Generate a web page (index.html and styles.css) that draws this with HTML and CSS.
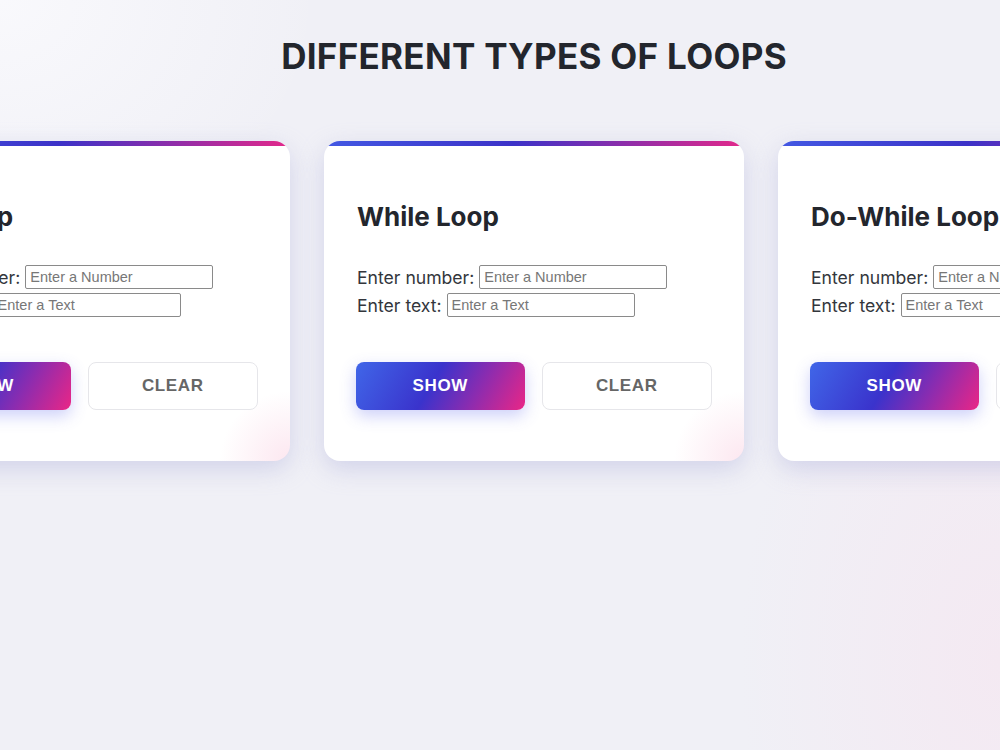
FILE: index.html
```html
<!DOCTYPE html>
<html lang="en">
<head>
<meta charset="UTF-8">
<title>Different Types of Loops</title>
<link rel="stylesheet" href="styles.css">
</head>
<body>
<main class="page">
  <h1 class="page-title">DIFFERENT TYPES OF LOOPS</h1>
  <section class="cards">
    <div class="card">
      <h2 class="card-title">For Loop</h2>
      <div class="fields">
        <div class="field"><label>Enter number:</label> <input type="number" placeholder="Enter a Number"></div>
        <div class="field"><label>Enter text:</label> <input type="text" placeholder="Enter a Text"></div>
      </div>
      <div class="actions">
        <button class="btn btn-show">SHOW</button>
        <button class="btn btn-clear">CLEAR</button>
      </div>
    </div>
    <div class="card">
      <h2 class="card-title">While Loop</h2>
      <div class="fields">
        <div class="field"><label>Enter number:</label> <input type="number" placeholder="Enter a Number"></div>
        <div class="field"><label>Enter text:</label> <input type="text" placeholder="Enter a Text"></div>
      </div>
      <div class="actions">
        <button class="btn btn-show">SHOW</button>
        <button class="btn btn-clear">CLEAR</button>
      </div>
    </div>
    <div class="card">
      <h2 class="card-title">Do-While Loop</h2>
      <div class="fields">
        <div class="field"><label>Enter number:</label> <input type="number" placeholder="Enter a Number"></div>
        <div class="field"><label>Enter text:</label> <input type="text" placeholder="Enter a Text"></div>
      </div>
      <div class="actions">
        <button class="btn btn-show">SHOW</button>
        <button class="btn btn-clear">CLEAR</button>
      </div>
    </div>
  </section>
</main>
</body>
</html>
```
FILE: styles.css
```css
html, body {
  margin: 0;
  height: 100%;
}

body {
  overflow: hidden;
  font-family: Inter, "Noto Sans", sans-serif;
  color: #23262d;
  background:
    radial-gradient(ellipse 260px 420px at 100% 88%, rgba(248, 226, 238, 0.5), rgba(248, 226, 238, 0) 100%),
    radial-gradient(ellipse 320px 260px at 0% 0%, rgba(250, 250, 253, 0.9), rgba(250, 250, 253, 0) 100%),
    #f0f0f6;
}

.page {
  width: 1068px;
  padding-top: 34px;
}

.page-title {
  margin: 0 0 63px;
  text-align: center;
  font-size: 35px;
  font-weight: 700;
  letter-spacing: 0.3px;
  line-height: 44px;
  color: #23262d;
}

.cards {
  display: flex;
  justify-content: center;
  gap: 34px;
}

.card {
  position: relative;
  flex: 0 0 420px;
  box-sizing: border-box;
  height: 320px;
  padding: 56px 32px 0 33px;
  background:
    radial-gradient(circle 70px at 100% 100%, rgba(252, 228, 238, 0.9), rgba(255, 255, 255, 0) 100%),
    #ffffff;
  border-radius: 16px;
  box-shadow: 0 8px 24px rgba(172, 176, 220, 0.45);
  overflow: hidden;
}

.card::before {
  content: "";
  position: absolute;
  top: 0;
  left: 0;
  right: 0;
  height: 5px;
  background: linear-gradient(90deg, #4358e3 0%, #3c32c8 45%, #e3288a 100%);
}

.card-title {
  margin: 0 0 28px;
  font-size: 26px;
  font-weight: 700;
  line-height: 40px;
  color: #23262d;
}

.fields {
  display: flex;
  flex-direction: column;
  gap: 4px;
  font-size: 17.6px;
  color: #33363c;
}

.field {
  display: flex;
  align-items: center;
  gap: 5px;
  height: 24px;
}

.field input {
  box-sizing: border-box;
  width: 188px;
  height: 24px;
  padding: 1px 4px;
  border: 1px solid #8a8a8a;
  border-radius: 2px;
  font-family: "Liberation Sans", Arial, sans-serif;
  font-size: 14.5px;
  color: #222;
  background: #fff;
  -moz-appearance: textfield;
}

.field input::-webkit-outer-spin-button,
.field input::-webkit-inner-spin-button {
  -webkit-appearance: none;
  margin: 0;
}

.field input::placeholder {
  color: #777;
}

.actions {
  display: flex;
  gap: 17px;
  margin-top: 45px;
  margin-left: -1px;
}

.btn {
  flex: 1;
  height: 48px;
  border-radius: 8px;
  font-family: "Liberation Sans", Arial, sans-serif;
  font-size: 17px;
  font-weight: 700;
  letter-spacing: 0.6px;
  cursor: pointer;
}

.btn-show {
  border: none;
  color: #ffffff;
  background: linear-gradient(120deg, #4066e8 0%, #3a33cc 45%, #8a2cb0 70%, #ea2686 100%);
  box-shadow: 0 6px 16px rgba(90, 100, 235, 0.3);
}

.btn-clear {
  border: 1px solid #e6e6ea;
  color: #666666;
  background: #ffffff;
}
```
